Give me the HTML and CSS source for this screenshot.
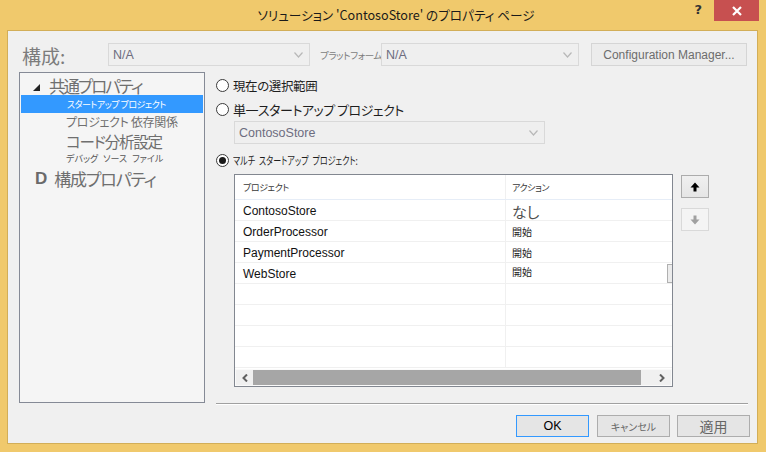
FILE: index.html
```html
<!DOCTYPE html>
<html lang="ja">
<head>
<meta charset="utf-8">
<title>ソリューション 'ContosoStore' のプロパティ ページ</title>
<link rel="stylesheet" href="styles.css">
</head>
<body>
<div class="window">
  <div class="titlebar">
    <div></div>
    <div class="title jp">ソリューション 'ContosoStore' のプロパティ ページ</div>
    <div class="controls">
      <span class="help">?</span>
      <span class="close"><svg width="10" height="10" viewBox="0 0 10 10"><path d="M1 1 L9 9 M9 1 L1 9" stroke="#fff" stroke-width="2.2"/></svg></span>
    </div>
  </div>
  <div class="client">
    <div class="config-row">
      <span class="cfg-label jp">構成:</span>
      <div class="select sel-config"><span>N/A</span><svg class="chev" width="9" height="6" viewBox="0 0 9 6"><path d="M0.5 0.5 L4.5 5 L8.5 0.5" fill="none" stroke="#b8b8b8" stroke-width="1.2"/></svg></div>
      <span class="plat-label jp">プラットフォーム</span>
      <div class="select sel-plat"><span>N/A</span><svg class="chev" width="9" height="6" viewBox="0 0 9 6"><path d="M0.5 0.5 L4.5 5 L8.5 0.5" fill="none" stroke="#b8b8b8" stroke-width="1.2"/></svg></div>
      <div class="btn cfg-btn">Configuration Manager...</div>
    </div>
    <div class="main">
      <div class="tree jp">
        <div class="t-item t-root"><svg class="t-tri" width="7" height="7" viewBox="0 0 7 7"><path d="M7 0 V7 H0 Z" fill="#222"/></svg><span>共通プロパティ</span></div>
        <div class="t-item t-sel"><span>スタートアップ プロジェクト</span></div>
        <div class="t-item t-dep"><span>プロジェクト 依存関係</span></div>
        <div class="t-item t-code"><span>コード分析設定</span></div>
        <div class="t-item t-dbg"><span>デバッグ ソース ファイル</span></div>
        <div class="t-item t-cfg"><span class="t-d">D</span><span>構成プロパティ</span></div>
      </div>
      <div class="panel">
        <label class="radio-row r1"><span class="radio"></span><span class="jp">現在の選択範囲</span></label>
        <label class="radio-row r2"><span class="radio"></span><span class="jp">単一スタートアップ プロジェクト</span></label>
        <div class="select sel-single"><span>ContosoStore</span><svg class="chev" width="9" height="6" viewBox="0 0 9 6"><path d="M0.5 0.5 L4.5 5 L8.5 0.5" fill="none" stroke="#b8b8b8" stroke-width="1.2"/></svg></div>
        <label class="radio-row r3"><span class="radio checked"></span><span class="jp narrow">マルチ スタートアップ プロジェクト:</span></label>
        <div class="grid-area">
          <div class="grid">
            <div class="g-head">
              <div class="c1 jp">プロジェクト</div>
              <div class="c2 jp">アクション</div>
            </div>
            <div class="g-row"><div class="c1">ContosoStore</div><div class="c2 jp act-none">なし</div></div>
            <div class="g-row"><div class="c1">OrderProcessor</div><div class="c2 jp act">開始</div></div>
            <div class="g-row"><div class="c1">PaymentProcessor</div><div class="c2 jp act">開始</div></div>
            <div class="g-row"><div class="c1">WebStore</div><div class="c2 jp act"><span>開始</span><span class="v-thumb"></span></div></div>
            <div class="g-row"><div class="c1"></div><div class="c2"></div></div>
            <div class="g-row"><div class="c1"></div><div class="c2"></div></div>
            <div class="g-row"><div class="c1"></div><div class="c2"></div></div>
            <div class="g-row"><div class="c1"></div><div class="c2"></div></div>
            <div class="hscroll">
              <svg class="arr" width="6" height="8" viewBox="0 0 6 8"><path d="M5 0.5 L1.5 4 L5 7.5" fill="none" stroke="#606060" stroke-width="2"/></svg>
              <div class="thumb"></div>
              <svg class="arr" width="6" height="8" viewBox="0 0 6 8"><path d="M1 0.5 L4.5 4 L1 7.5" fill="none" stroke="#606060" stroke-width="2"/></svg>
            </div>
          </div>
          <div class="move-btns">
            <div class="mv up"><svg width="10" height="10" viewBox="0 0 10 10"><path d="M5 0.5 L9.5 5.5 H6.5 V9.5 H3.5 V5.5 H0.5 Z" fill="#000"/></svg></div>
            <div class="mv down"><svg width="10" height="10" viewBox="0 0 10 10"><path d="M5 9.5 L9.5 4.5 H6.5 V0.5 H3.5 V4.5 H0.5 Z" fill="#a0a0a0"/></svg></div>
          </div>
        </div>
        <div class="separator"></div>
      </div>
    </div>
    <div class="footer">
      <div class="btn fbtn ok">OK</div>
      <div class="btn fbtn cancel jp">キャンセル</div>
      <div class="btn fbtn apply jp">適用</div>
    </div>
  </div>
</div>
</body>
</html>
```
FILE: styles.css
```css
html, body {
  margin: 0;
  padding: 0;
}
body {
  width: 766px;
  height: 452px;
  overflow: hidden;
  background: #f0c96c;
  font-family: "Liberation Sans", "Noto Sans CJK JP", sans-serif;
  font-size: 12px;
  color: #1e1e1e;
}
.jp {
  font-family: "Noto Sans CJK JP", "Liberation Sans", sans-serif;
  font-feature-settings: "palt";
}
.narrow {
  display: inline-block;
  transform: scaleX(0.73);
  transform-origin: left center;
  word-spacing: 3px;
}
.window {
  height: 452px;
  display: flex;
  flex-direction: column;
}
.titlebar {
  height: 30px;
  display: grid;
  grid-template-columns: 1fr auto 1fr;
  align-items: start;
}
.title {
  line-height: 30px;
  font-size: 12.6px;
  color: #1a1a1a;
  white-space: nowrap;
  margin-left: 26px;
}
.controls {
  display: flex;
  justify-content: flex-end;
  align-items: flex-start;
  margin-right: 7px;
}
.help {
  font-family: "DejaVu Sans", sans-serif;
  font-weight: bold;
  font-size: 13px;
  line-height: 20px;
  color: #333;
  margin-right: 12px;
}
.close {
  width: 45px;
  height: 21px;
  background: #c75050;
  display: flex;
  align-items: center;
  justify-content: center;
}
.client {
  flex: 1;
  margin: 0 8px 8px 7px;
  border: 1px solid #d2ae58;
  background: #f0f0f0;
  display: flex;
  flex-direction: column;
}
/* config row */
.config-row {
  display: flex;
  align-items: center;
  height: 23px;
  margin-top: 12px;
  padding-left: 14px;
}
.cfg-label {
  width: 86px;
  font-size: 19px;
  color: #7c7c7c;
  line-height: 23px;
  margin-top: 2px;
}
.select {
  box-sizing: border-box;
  height: 23px;
  border: 1px solid #d9d9d9;
  background: #efefef;
  display: flex;
  align-items: center;
  justify-content: space-between;
  padding: 0 6px 0 4px;
  color: #6d6d80;
  font-size: 12.5px;
}
.sel-config { width: 202px; }
.sel-plat { width: 198px; }
.plat-label {
  width: 61px;
  margin-left: 10px;
  font-size: 9.5px;
  letter-spacing: -0.4px;
  color: #7d7d7d;
  white-space: nowrap;
  overflow: hidden;
}
.btn {
  box-sizing: border-box;
  display: flex;
  align-items: center;
  justify-content: center;
}
.cfg-btn {
  width: 156px;
  height: 23px;
  margin-left: 12px;
  border: 1px solid #d5d5d5;
  background: #ececec;
  color: #6d6d6d;
  font-size: 12px;
}
/* main */
.main {
  display: flex;
  margin-top: 6px;
  margin-left: 11px;
  gap: 11px;
}
.tree {
  width: 186px;
  height: 331px;
  box-sizing: border-box;
  border: 1px solid #858a96;
  background: #f5f5f5;
  padding: 0 1px;
  color: #6f6f6f;
}
.t-item {
  display: flex;
  align-items: center;
  white-space: nowrap;
}
.t-item span {
  line-height: 1;
}
.t-root {
  margin-top: 5px;
  height: 17px;
  font-size: 16.5px;
  letter-spacing: -2px;
}
.t-tri {
  margin-left: 12px;
  margin-right: 9px;
  margin-top: 1px;
}
.t-sel {
  height: 18px;
  background: #3399ff;
  color: #fff;
  font-size: 9px;
  letter-spacing: -0.5px;
  padding-left: 46px;
}
.t-dep {
  height: 18px;
  font-size: 12px;
  padding-left: 45px;
  letter-spacing: -0.3px;
}
.t-code {
  height: 21px;
  font-size: 15.5px;
  padding-left: 45px;
  letter-spacing: -1.2px;
}
.t-dbg {
  margin-top: 1px;
  height: 11px;
  font-size: 9px;
  padding-left: 45px;
  word-spacing: 3px;
  color: #555;
}
.t-cfg {
  margin-top: 4px;
  height: 20px;
  font-size: 17px;
  padding-left: 14px;
  letter-spacing: -1.2px;
}
.t-d {
  font-family: "Liberation Sans", sans-serif;
  font-weight: bold;
  font-size: 17px;
  letter-spacing: 0;
  color: #6a6a6a;
  margin-right: 7px;
}
/* panel */
.panel {
  width: 532px;
  display: flex;
  flex-direction: column;
}
.radio-row {
  display: flex;
  align-items: center;
  height: 16px;
  white-space: nowrap;
}
.r1 { margin-top: 5px; font-size: 12.5px; letter-spacing: -0.4px; }
.r2 { margin-top: 8px; font-size: 13px; letter-spacing: -0.5px; }
.r3 { margin-top: 8px; font-size: 11px; }
.radio {
  box-sizing: border-box;
  width: 13px;
  height: 13px;
  border: 1px solid #3a3a3a;
  border-radius: 50%;
  background: #fff;
  margin-right: 4px;
  display: flex;
  align-items: center;
  justify-content: center;
  flex: none;
}
.radio.checked::after {
  content: "";
  width: 7px;
  height: 7px;
  border-radius: 50%;
  background: #1a1a1a;
}
.sel-single {
  width: 311px;
  margin-top: 4px;
  margin-left: 18px;
}
.grid-area {
  display: flex;
  margin-top: 6px;
  margin-left: 18px;
}
.grid {
  width: 439px;
  height: 213px;
  box-sizing: border-box;
  border: 1px solid #828790;
  background: #fff;
  display: flex;
  flex-direction: column;
}
.g-head {
  display: flex;
  height: 24px;
  border-bottom: 1px solid #e6edf7;
  color: #3a3a3a;
  font-size: 9px;
  letter-spacing: -0.4px;
  flex: none;
}
.g-row {
  display: flex;
  height: 20px;
  border-bottom: 1px solid #f0f0f0;
  flex: none;
}
.c1 {
  width: 271px;
  padding-left: 8px;
  box-sizing: border-box;
  display: flex;
  align-items: center;
  border-right: 1px solid #f0f0f0;
}
.c2 {
  flex: 1;
  padding-left: 6px;
  display: flex;
  align-items: center;
}
.g-row .c1 {
  font-size: 12px;
  color: #111;
  padding-top: 1px;
}
.act-none {
  font-size: 15px;
  color: #505050;
  padding-top: 3px;
}
.act {
  font-size: 10px;
  color: #222;
}
.act span:first-child { margin-top: -4px; }
.v-thumb {
  margin-left: auto;
  width: 5px;
  height: 19px;
  box-sizing: border-box;
  border: 1px solid #b0b0b0;
  border-right: none;
  background: #ececec;
  align-self: flex-end;
}
.hscroll {
  margin-top: 1px;
  height: 17px;
  display: flex;
  align-items: center;
  background: #f0f0f0;
  border: 1px solid #fafafa;
  box-sizing: border-box;
}
.hscroll .arr {
  flex: none;
  margin: 0 6px;
}
.thumb {
  width: 388px;
  height: 15px;
  background: #a6a6a6;
  margin-left: -1px;
  margin-right: auto;
}
.move-btns {
  margin-left: 8px;
  display: flex;
  flex-direction: column;
}
.mv {
  box-sizing: border-box;
  width: 28px;
  height: 23px;
  display: flex;
  align-items: center;
  justify-content: center;
}
.up {
  margin-top: 1px;
  border: 1px solid #acacac;
  background: linear-gradient(#f0f0f0, #e5e5e5);
}
.down {
  margin-top: 10px;
  border: 1px solid #d9d9d9;
  background: #f4f4f4;
}
.separator {
  margin-top: 16px;
  border-top: 1px solid #a0a0a0;
  border-bottom: 1px solid #ffffff;
}
/* footer */
.footer {
  display: flex;
  justify-content: flex-end;
  margin-top: 10px;
  padding-right: 7px;
}
.fbtn {
  width: 73px;
  height: 22px;
  border: 1px solid #adadad;
  background: #e5e5e5;
  color: #666;
}
.ok {
  border-color: #3399ff;
  color: #000;
  font-size: 12.5px;
}
.cancel {
  margin-left: 8px;
  font-size: 10px;
}
.apply {
  margin-left: 7px;
  font-size: 14px;
}
```
